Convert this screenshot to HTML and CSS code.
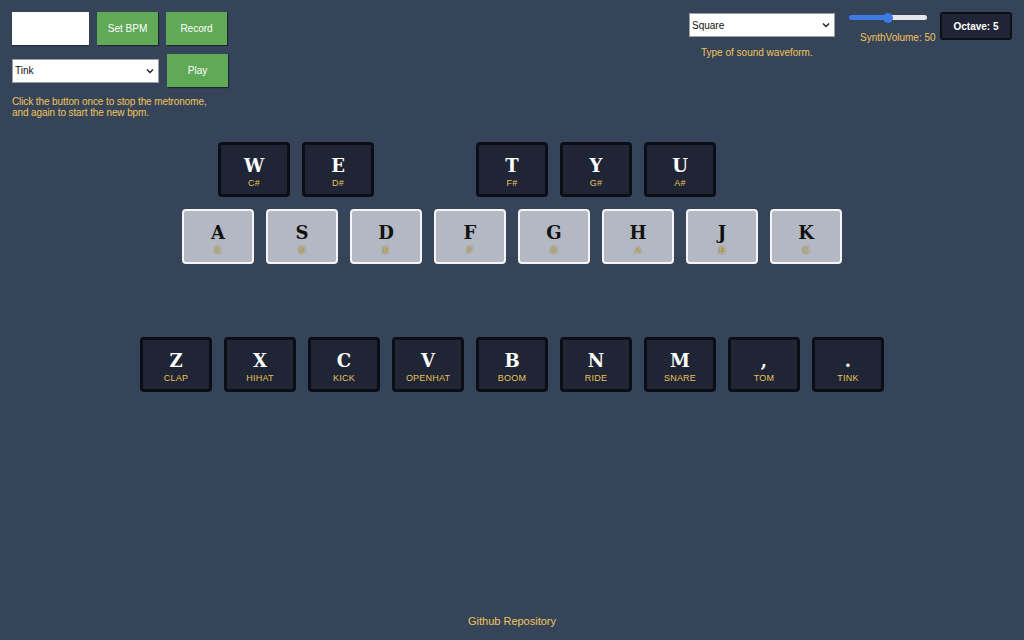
FILE: index.html
```html
<!DOCTYPE html>
<html lang="en">
<head>
<meta charset="utf-8">
<title>Synth Drum Kit</title>
<link rel="stylesheet" href="styles.css">
</head>
<body>
<div class="page">
  <header class="header">
    <div class="left">
      <div class="row">
        <input class="bpm-input" type="text">
        <button class="btn">Set BPM</button>
        <button class="btn">Record</button>
      </div>
      <div class="row row-2">
        <div class="select-wrap sound-select">
          <select class="select"><option>Tink</option></select>
          <svg class="chev" width="8" height="6" viewBox="0 0 8 6"><path d="M1 1.5 L4 4.5 L7 1.5" fill="none" stroke="#222" stroke-width="1.4"/></svg>
        </div>
        <button class="btn">Play</button>
      </div>
      <p class="hint">Click the button once to stop the metronome,<br>and again to start the new bpm.</p>
    </div>
    <div class="right">
      <div class="wave">
        <div class="select-wrap wave-select">
          <select class="select"><option>Square</option></select>
          <svg class="chev" width="8" height="6" viewBox="0 0 8 6"><path d="M1 1.5 L4 4.5 L7 1.5" fill="none" stroke="#222" stroke-width="1.4"/></svg>
        </div>
        <p class="caption">Type of sound waveform.</p>
      </div>
      <div class="volume">
        <input class="slider" type="range" min="0" max="100" value="50">
        <p class="caption vol-label">SynthVolume: 50</p>
      </div>
      <div class="octave">Octave: 5</div>
    </div>
  </header>

  <main class="keyboard">
    <div class="keys">
      <div class="key dark"><span class="letter">W</span><span class="note">C#</span></div>
      <div class="key dark"><span class="letter">E</span><span class="note">D#</span></div>
      <div class="spacer"></div>
      <div class="key dark"><span class="letter">T</span><span class="note">F#</span></div>
      <div class="key dark"><span class="letter">Y</span><span class="note">G#</span></div>
      <div class="key dark"><span class="letter">U</span><span class="note">A#</span></div>
      <div class="spacer"></div>
    </div>
    <div class="keys">
      <div class="key light"><span class="letter">A</span><span class="note">C</span></div>
      <div class="key light"><span class="letter">S</span><span class="note">D</span></div>
      <div class="key light"><span class="letter">D</span><span class="note">E</span></div>
      <div class="key light"><span class="letter">F</span><span class="note">F</span></div>
      <div class="key light"><span class="letter">G</span><span class="note">G</span></div>
      <div class="key light"><span class="letter">H</span><span class="note">A</span></div>
      <div class="key light"><span class="letter">J</span><span class="note">B</span></div>
      <div class="key light"><span class="letter">K</span><span class="note">C</span></div>
    </div>
    <div class="keys drums">
      <div class="key dark"><span class="letter">Z</span><span class="note">CLAP</span></div>
      <div class="key dark"><span class="letter">X</span><span class="note">HIHAT</span></div>
      <div class="key dark"><span class="letter">C</span><span class="note">KICK</span></div>
      <div class="key dark"><span class="letter">V</span><span class="note">OPENHAT</span></div>
      <div class="key dark"><span class="letter">B</span><span class="note">BOOM</span></div>
      <div class="key dark"><span class="letter">N</span><span class="note">RIDE</span></div>
      <div class="key dark"><span class="letter">M</span><span class="note">SNARE</span></div>
      <div class="key dark"><span class="letter">,</span><span class="note">TOM</span></div>
      <div class="key dark"><span class="letter">.</span><span class="note">TINK</span></div>
    </div>
  </main>

  <footer class="footer">
    <a class="repo" href="#">Github Repository</a>
  </footer>
</div>
</body>
</html>
```

FILE: styles.css
```css
html, body {
  margin: 0;
  padding: 0;
  background: #36445a;
}

body {
  font-family: "Liberation Sans", Arial, sans-serif;
  color: #f0c458;
}

.page {
  box-sizing: border-box;
  height: 640px;
  padding: 12px 12px 0 12px;
  display: flex;
  flex-direction: column;
}

.header {
  display: flex;
  justify-content: space-between;
  align-items: flex-start;
  height: 106px;
}

.left {
  display: flex;
  flex-direction: column;
}

.row {
  display: flex;
  align-items: center;
  gap: 8px;
}

.row-2 {
  margin-top: 9px;
}

.bpm-input {
  box-sizing: border-box;
  width: 77px;
  height: 33px;
  margin: 0;
  border: none;
  background: #fff;
  box-shadow: 0 1px 1px rgba(0, 0, 0, 0.35);
}

.btn {
  box-sizing: border-box;
  width: 61px;
  height: 33px;
  margin: 0;
  border: none;
  background: #5fa957;
  color: #fff;
  font-family: "Liberation Sans", Arial, sans-serif;
  font-size: 10px;
  box-shadow: 1px 1px 1px rgba(0, 0, 0, 0.45);
  padding: 0;
}

.select-wrap {
  position: relative;
  height: 24px;
}

.sound-select {
  width: 147px;
}

.wave-select {
  width: 146px;
}

.select {
  appearance: none;
  -webkit-appearance: none;
  box-sizing: border-box;
  width: 100%;
  height: 24px;
  margin: 0;
  border: 1px solid #9aa0a8;
  border-radius: 0;
  background: #fff;
  color: #111;
  font-family: "Liberation Sans", Arial, sans-serif;
  font-size: 10px;
  padding: 0 0 0 2px;
}

.chev {
  position: absolute;
  right: 5px;
  top: 9px;
  pointer-events: none;
}

.hint {
  margin: 9px 0 0 0;
  font-size: 10px;
  line-height: 11px;
  letter-spacing: -0.1px;
  color: #f0c458;
}

.right {
  display: flex;
  align-items: flex-start;
}

.wave {
  display: flex;
  flex-direction: column;
  margin-top: 1px;
}

.caption {
  margin: 0;
  font-size: 10px;
  line-height: 11px;
  color: #f0c458;
  white-space: nowrap;
}

.wave .caption {
  margin-top: 10px;
  padding-left: 12px;
}

.volume {
  display: flex;
  flex-direction: column;
  margin-left: 14px;
  width: 85px;
}

.slider {
  appearance: none;
  -webkit-appearance: none;
  width: 78px;
  height: 5px;
  margin: 3px 0 0 0;
  border-radius: 3px;
  background: linear-gradient(to right, #3b7be3 0%, #3b7be3 50%, #e4e6ea 50%, #e4e6ea 100%);
  outline: none;
}

.slider::-webkit-slider-thumb {
  -webkit-appearance: none;
  appearance: none;
  width: 10px;
  height: 10px;
  border-radius: 50%;
  background: #3b7be3;
  border: none;
}

.vol-label {
  margin-top: 12px;
  padding-left: 11px;
}

.octave {
  box-sizing: border-box;
  width: 72px;
  height: 28px;
  margin-left: 6px;
  background: #1f2534;
  border: 2px solid #0c0f16;
  border-radius: 3px;
  color: #fff;
  font-size: 10px;
  font-weight: bold;
  display: flex;
  align-items: center;
  justify-content: center;
}

.keyboard {
  margin-top: 24px;
  display: flex;
  flex-direction: column;
  gap: 12px;
}

.keys {
  display: flex;
  justify-content: center;
  gap: 12px;
}

.keys.drums {
  margin-top: 61px;
}

.spacer {
  width: 78px;
  height: 55px;
}

.key {
  box-sizing: border-box;
  width: 72px;
  height: 55px;
  border-radius: 4px;
  display: flex;
  flex-direction: column;
  align-items: center;
  justify-content: center;
  padding-top: 6px;
}

.key.dark {
  background: #1f2534;
  border: 3px solid #0b0e15;
}

.key.light {
  background: #b4b8c3;
  border: 2px solid #f5f5f7;
}

.letter {
  font-family: "DejaVu Serif", "Liberation Serif", serif;
  font-weight: bold;
  font-size: 18px;
  line-height: 18px;
}

.dark .letter {
  color: #fff;
}

.light .letter {
  color: #111;
}

.note {
  margin-top: 3px;
  font-size: 9px;
  line-height: 10px;
  letter-spacing: 0.2px;
  color: #e9c15c;
}

.light .note {
  color: #d2b04a;
  text-shadow: 0 0 2px #7d7550, 0 0 3px #8d8666;
}

.footer {
  margin-top: auto;
  height: 29px;
  text-align: center;
}

.repo {
  color: #f0c458;
  text-decoration: none;
  font-size: 11px;
  line-height: 12px;
}
```
